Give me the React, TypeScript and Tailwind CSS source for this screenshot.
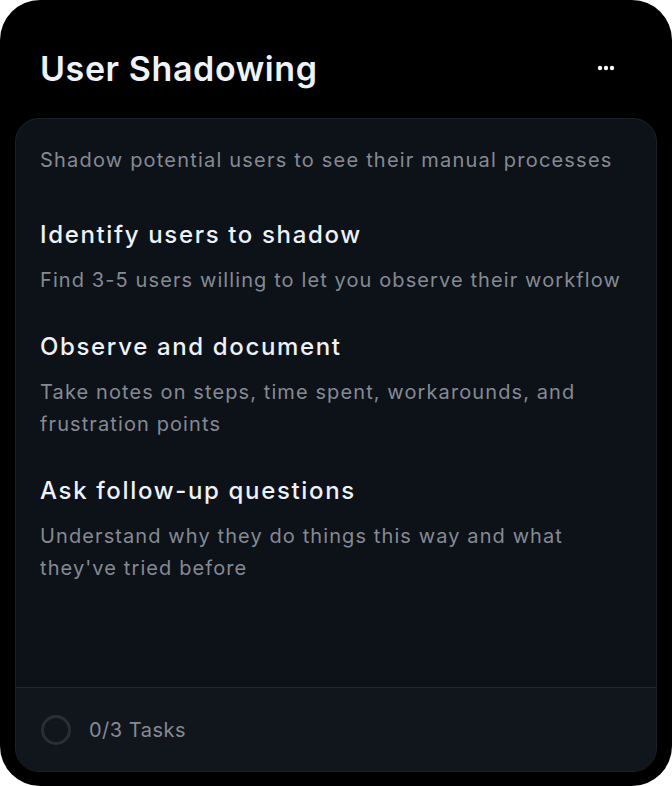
import React from "react";

const steps = [
  {
    title: "Identify users to shadow",
    body: "Find 3-5 users willing to let you observe their workflow",
  },
  {
    title: "Observe and document",
    body: "Take notes on steps, time spent, workarounds, and frustration points",
  },
  {
    title: "Ask follow-up questions",
    body: "Understand why they do things this way and what they've tried before",
  },
];

export default function App() {
  return (
    <div className="w-[672px] h-[786px] bg-white font-['Inter',sans-serif]">
      <div className="w-full h-full bg-black rounded-[40px] flex flex-col px-[15px] pb-[14px]">
        <div className="flex items-center justify-between h-[118px] pl-[25px] pr-[42px] pt-[19px]">
          <h1 className="text-[34px] leading-[40px] font-semibold text-[#eef3fa] tracking-[0.6px]">
            User Shadowing
          </h1>
          <button className="flex items-center -mt-[1px]">
            <svg width="18" height="6" viewBox="0 0 18 6">
              <circle cx="3" cy="3" r="2.2" fill="#f5f7fa" />
              <circle cx="9" cy="3" r="2.2" fill="#f5f7fa" />
              <circle cx="15" cy="3" r="2.2" fill="#f5f7fa" />
            </svg>
          </button>
        </div>

        <div className="flex-1 flex flex-col rounded-[24px] border border-[#1c2028] bg-[#0d1118] overflow-hidden">
          <div className="flex-1 px-[24px] pt-[25px]">
            <p className="text-[20px] leading-[32px] text-[#858a93] tracking-[1.2px]">
              Shadow potential users to see their manual processes
            </p>
            <div className="mt-[43px] flex flex-col gap-[35px]">
              {steps.map((s) => (
                <div key={s.title} className="flex flex-col gap-[13px]">
                  <h2 className="text-[24px] leading-[32px] font-medium text-[#eef2f8] tracking-[1.65px]">
                    {s.title}
                  </h2>
                  <p className="text-[20px] leading-[32px] text-[#858a93] tracking-[1.1px]">
                    {s.body}
                  </p>
                </div>
              ))}
            </div>
          </div>
          <div className="h-[84px] border-t border-[#232731] bg-[#11151c] flex items-center gap-[18px] px-[25px] pt-[1px]">
            <span className="w-[30px] h-[30px] rounded-full border-[3px] border-[#2a2e36]" />
            <span className="text-[20px] text-[#858a93] tracking-[0.5px]">0/3 Tasks</span>
          </div>
        </div>
      </div>
    </div>
  );
}
